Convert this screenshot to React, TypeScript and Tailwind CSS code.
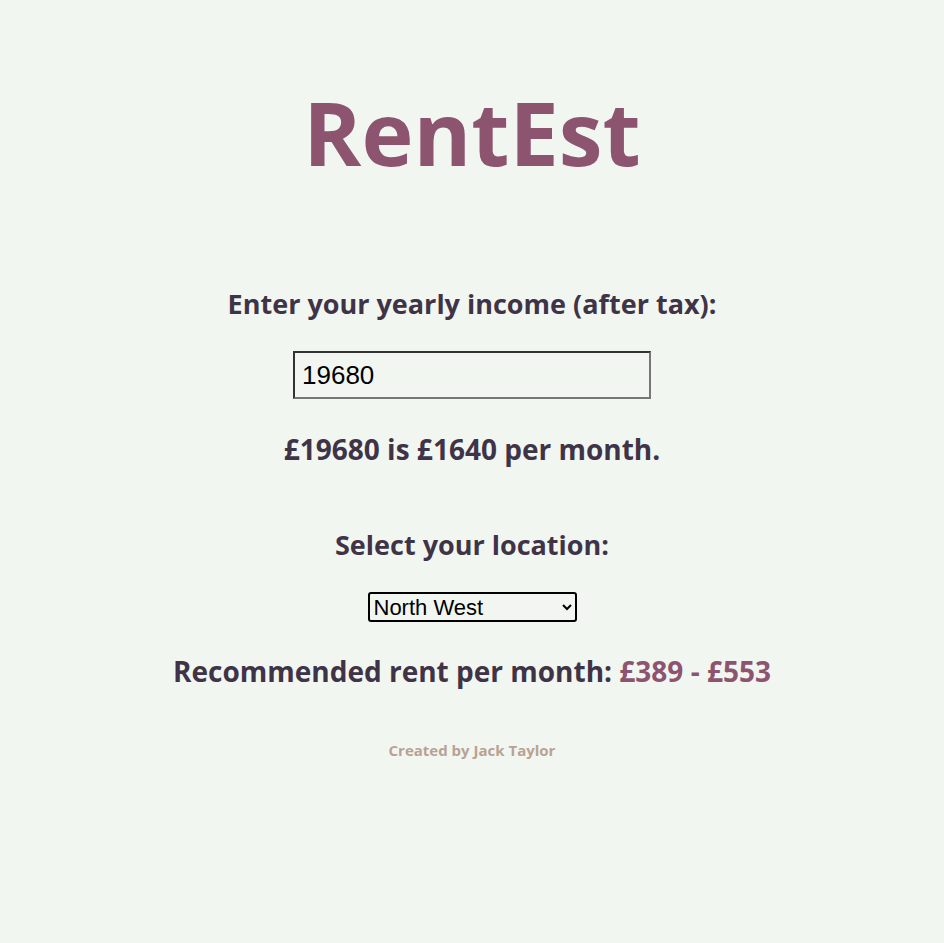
import { useState } from 'react';

const font = { fontFamily: '"Open Sans", "Noto Sans", sans-serif' };

export default function App() {
  const [income, setIncome] = useState('19680');
  const [region, setRegion] = useState('North West');
  const yearly = Number(income) || 0;
  const monthly = Math.round(yearly / 12);

  return (
    <div className="min-h-[943px] bg-[#f2f6f1] text-[#3f3447] text-center" style={font}>
      <h1 className="pt-[88px] text-[88px] leading-[88px] font-bold text-[#8d5470]">RentEst</h1>

      <h2 className="mt-[110px] text-[27px] leading-[36px] font-bold">Enter your yearly income (after tax):</h2>
      <input
        className="mt-[29px] w-[358px] h-[48px] border-2 border-t-[#333] border-l-[#333] border-b-[#767676] border-r-[#767676] bg-transparent px-[7px] text-[26px] text-black outline-none"
        style={{ fontFamily: '"Liberation Sans", Arial, sans-serif' }}
        value={income}
        onChange={e => setIncome(e.target.value)}
      />
      <p className="mt-[32px] text-[28px] leading-[36px] font-bold">
        £{yearly} is £{monthly} per month.
      </p>

      <h2 className="mt-[60px] text-[27px] leading-[36px] font-bold">Select your location:</h2>
      <select
        className="mt-[29px] w-[209px] h-[30px] border-2 border-black rounded-[3px] bg-transparent text-[22px] text-black"
        style={{ fontFamily: '"Liberation Sans", Arial, sans-serif' }}
        value={region}
        onChange={e => setRegion(e.target.value)}
      >
        <option>North East</option>
        <option>North West</option>
        <option>Yorkshire and the Humber</option>
        <option>East Midlands</option>
        <option>West Midlands</option>
        <option>East of England</option>
        <option>London</option>
        <option>South East</option>
        <option>South West</option>
      </select>

      <p className="mt-[31px] text-[28px] leading-[36px] font-bold">
        Recommended rent per month: <span className="text-[#8d5470]">£389 - £553</span>
      </p>

      <p className="mt-[50px] text-[15px] font-bold text-[#b9a293]">Created by Jack Taylor</p>
    </div>
  );
}
